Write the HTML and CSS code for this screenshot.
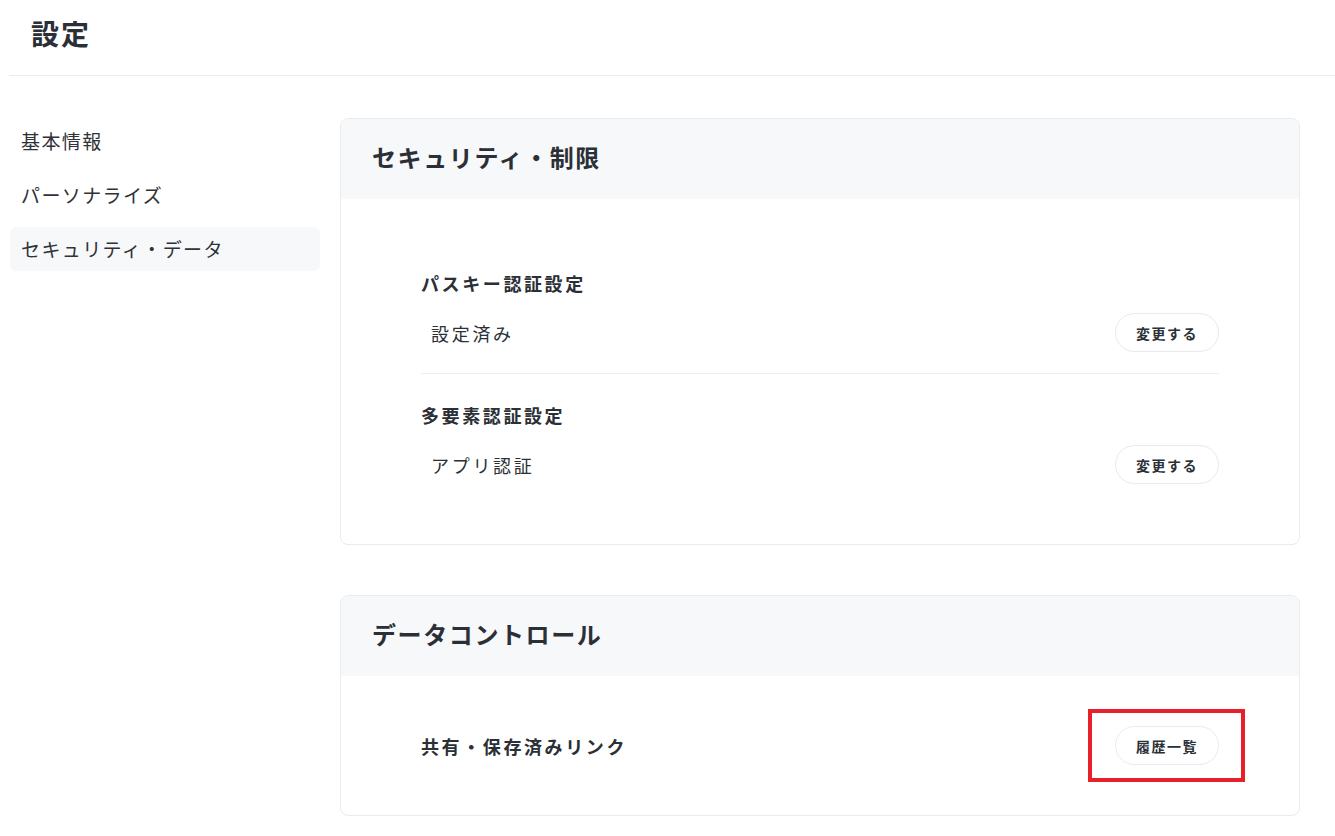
FILE: index.html
```html
<!DOCTYPE html>
<html lang="ja">

<head>
    <meta charset="UTF-8">
    <meta name="viewport" content="width=device-width, initial-scale=1.0">
    <title>設定</title>
    <link rel="stylesheet" href="styles.css">
</head>

<body>
    <!-- En-tête -->
    <div class="page-header">
        <h1>設定</h1>
    </div>

    <div class="layout">
        <!-- Menu latéral -->
        <ul class="side-menu">
            <li><a href="#">基本情報</a></li>
            <li><a href="#">パーソナライズ</a></li>
            <li class="active"><a href="#">セキュリティ・データ</a></li>
        </ul>

        <!-- Contenu -->
        <div class="content">
            <div class="card">
                <div class="card-header">
                    <h2>セキュリティ・制限</h2>
                </div>
                <div class="card-body">
                    <div class="setting">
                        <h3>パスキー認証設定</h3>
                        <div class="setting-row">
                            <span class="setting-value">設定済み</span>
                            <button class="pill">変更する</button>
                        </div>
                    </div>
                    <div class="setting">
                        <h3>多要素認証設定</h3>
                        <div class="setting-row">
                            <span class="setting-value">アプリ認証</span>
                            <button class="pill">変更する</button>
                        </div>
                    </div>
                </div>
            </div>

            <div class="card">
                <div class="card-header">
                    <h2>データコントロール</h2>
                </div>
                <div class="card-body compact">
                    <div class="setting-row">
                        <h3>共有・保存済みリンク</h3>
                        <span class="highlight">
                            <button class="pill">履歴一覧</button>
                        </span>
                    </div>
                </div>
            </div>
        </div>
    </div>
</body>

</html>
```

FILE: styles.css
```css
/* Corps de la page */
body {
    font-family: "Noto Sans CJK JP", "Noto Sans", sans-serif;
    margin: 0;
    padding: 0;
    background-color: #fff;
    color: #2b2f36;
}

/* En-tête */
.page-header {
    margin-left: 9px;
    height: 76px;
    border-bottom: 1px solid #e9ebee;
    display: flex;
    align-items: center;
    padding-left: 22px;
    padding-bottom: 9px;
    box-sizing: border-box;
}

.page-header h1 {
    margin: 0;
    font-size: 28px;
    font-weight: 700;
    letter-spacing: 2px;
}

/* Mise en page principale */
.layout {
    display: flex;
    gap: 20px;
    padding: 42px 35px 20px 10px;
}

/* Menu latéral */
.side-menu {
    list-style: none;
    margin: 1px 0 0;
    padding: 0;
    width: 310px;
    flex-shrink: 0;
    display: flex;
    flex-direction: column;
    gap: 10px;
}

.side-menu li a {
    display: flex;
    align-items: center;
    height: 44px;
    padding-left: 11px;
    padding-bottom: 2px;
    box-sizing: border-box;
    border-radius: 6px;
    font-size: 19px;
    letter-spacing: 1.4px;
    color: #2f3237;
    text-decoration: none;
}

.side-menu li.active a {
    background-color: #f6f8fa;
}

/* Cartes */
.content {
    flex: 1;
    display: flex;
    flex-direction: column;
    gap: 50px;
}

.card {
    border: 1px solid #e9ebee;
    border-radius: 8px;
    overflow: hidden;
}

.card-header {
    background-color: #f7f8fa;
    height: 80px;
    box-sizing: border-box;
    display: flex;
    align-items: center;
    padding-left: 31px;
    padding-bottom: 5px;
}

.card-header h2 {
    margin: 0;
    font-size: 24px;
    font-weight: 700;
    letter-spacing: 1.6px;
}

.card-body {
    padding: 70px 80px 60px;
}

.card-body.compact {
    padding: 50px 80px 50px;
}

.setting + .setting {
    border-top: 1px solid #eceef0;
    margin-top: 21px;
    padding-top: 27px;
}

.setting h3,
.setting-row h3 {
    margin: 0;
    font-size: 18px;
    font-weight: 700;
    line-height: 28px;
    letter-spacing: 2.6px;
}

.setting h3 {
    margin-bottom: 16px;
}

.setting-row {
    display: flex;
    justify-content: space-between;
    align-items: center;
}

.setting-value {
    padding-left: 10px;
    font-size: 18px;
    letter-spacing: 2.7px;
}

/* Boutons */
.pill {
    font-family: inherit;
    width: 104px;
    height: 39px;
    background-color: #fff;
    border: 1px solid #e8eaed;
    border-radius: 20px;
    font-size: 14px;
    font-weight: 700;
    letter-spacing: 1.5px;
    color: #2b2f36;
    cursor: pointer;
}

/* Encadré rouge (annotation) */
.highlight {
    position: relative;
    display: flex;
}

.highlight::after {
    content: "";
    position: absolute;
    left: -27px;
    top: -17px;
    width: 149px;
    height: 65px;
    border: 4px solid #e8202a;
}
```
